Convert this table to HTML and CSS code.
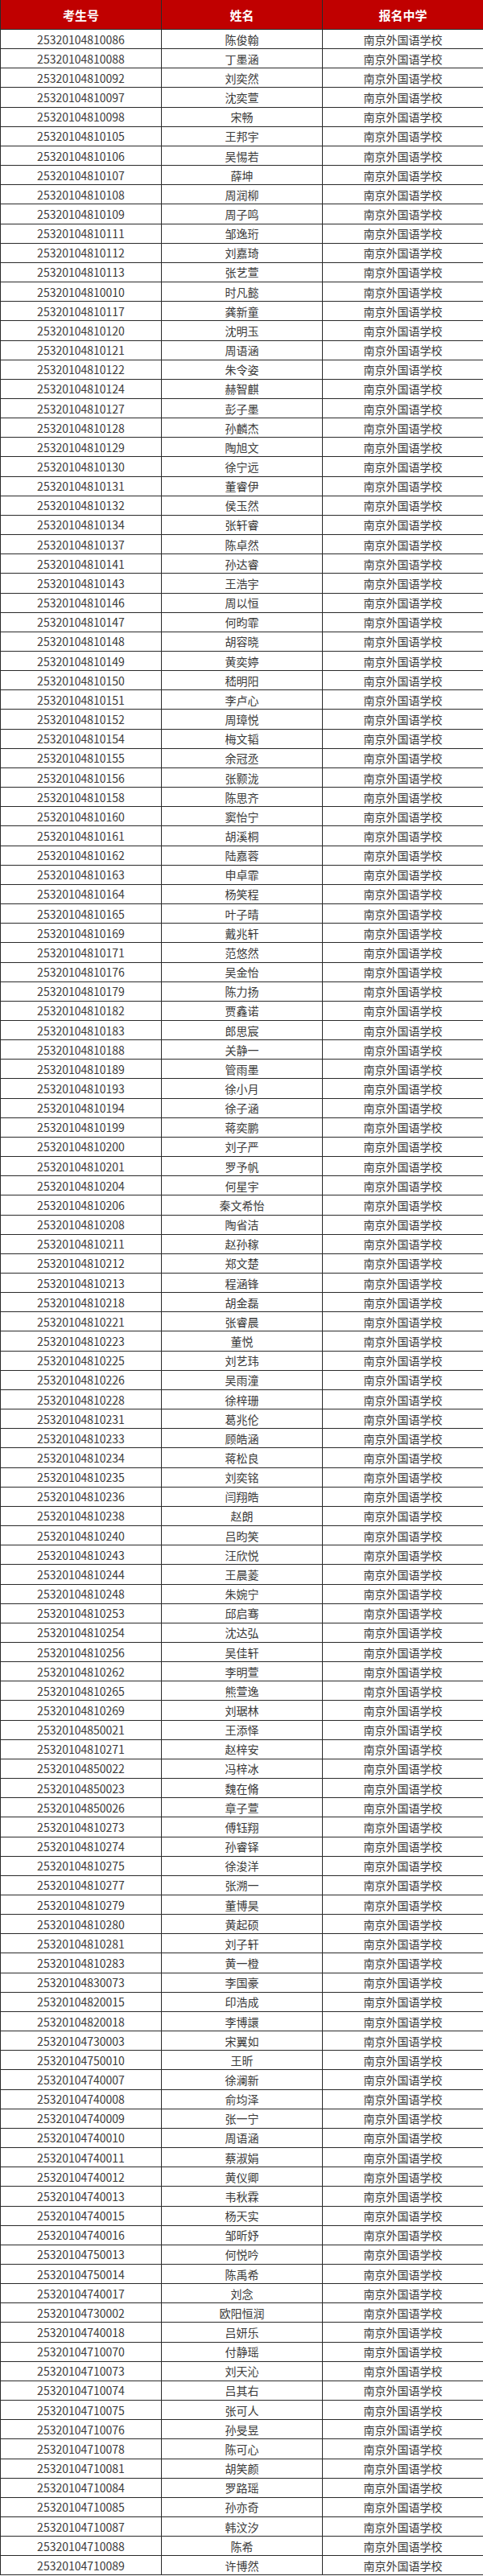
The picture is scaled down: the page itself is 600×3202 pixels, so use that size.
FILE: index.html
```html
<!DOCTYPE html>
<html lang="zh-CN">
<head>
<meta charset="utf-8">
<title>南京外国语学校 名单</title>
<link rel="stylesheet" href="styles.css">
</head>
<body>
<table class="roster">
<colgroup><col class="c1"><col class="c2"><col class="c3"></colgroup>
<thead>
<tr class="head"><th>考生号</th><th>姓名</th><th>报名中学</th></tr>
</thead>
<tbody>
<tr><td>25320104810086</td><td>陈俊翰</td><td>南京外国语学校</td></tr>
<tr><td>25320104810088</td><td>丁墨涵</td><td>南京外国语学校</td></tr>
<tr><td>25320104810092</td><td>刘奕然</td><td>南京外国语学校</td></tr>
<tr><td>25320104810097</td><td>沈奕萱</td><td>南京外国语学校</td></tr>
<tr><td>25320104810098</td><td>宋畅</td><td>南京外国语学校</td></tr>
<tr><td>25320104810105</td><td>王邦宇</td><td>南京外国语学校</td></tr>
<tr><td>25320104810106</td><td>吴惕若</td><td>南京外国语学校</td></tr>
<tr><td>25320104810107</td><td>薛坤</td><td>南京外国语学校</td></tr>
<tr><td>25320104810108</td><td>周润柳</td><td>南京外国语学校</td></tr>
<tr><td>25320104810109</td><td>周子鸣</td><td>南京外国语学校</td></tr>
<tr><td>25320104810111</td><td>邹逸珩</td><td>南京外国语学校</td></tr>
<tr><td>25320104810112</td><td>刘嘉琦</td><td>南京外国语学校</td></tr>
<tr><td>25320104810113</td><td>张艺萱</td><td>南京外国语学校</td></tr>
<tr><td>25320104810010</td><td>时凡懿</td><td>南京外国语学校</td></tr>
<tr><td>25320104810117</td><td>龚新童</td><td>南京外国语学校</td></tr>
<tr><td>25320104810120</td><td>沈明玉</td><td>南京外国语学校</td></tr>
<tr><td>25320104810121</td><td>周语涵</td><td>南京外国语学校</td></tr>
<tr><td>25320104810122</td><td>朱令姿</td><td>南京外国语学校</td></tr>
<tr><td>25320104810124</td><td>赫智麒</td><td>南京外国语学校</td></tr>
<tr><td>25320104810127</td><td>彭子墨</td><td>南京外国语学校</td></tr>
<tr><td>25320104810128</td><td>孙麟杰</td><td>南京外国语学校</td></tr>
<tr><td>25320104810129</td><td>陶旭文</td><td>南京外国语学校</td></tr>
<tr><td>25320104810130</td><td>徐宁远</td><td>南京外国语学校</td></tr>
<tr><td>25320104810131</td><td>董睿伊</td><td>南京外国语学校</td></tr>
<tr><td>25320104810132</td><td>侯玉然</td><td>南京外国语学校</td></tr>
<tr><td>25320104810134</td><td>张轩睿</td><td>南京外国语学校</td></tr>
<tr><td>25320104810137</td><td>陈卓然</td><td>南京外国语学校</td></tr>
<tr><td>25320104810141</td><td>孙达睿</td><td>南京外国语学校</td></tr>
<tr><td>25320104810143</td><td>王浩宇</td><td>南京外国语学校</td></tr>
<tr><td>25320104810146</td><td>周以恒</td><td>南京外国语学校</td></tr>
<tr><td>25320104810147</td><td>何昀霏</td><td>南京外国语学校</td></tr>
<tr><td>25320104810148</td><td>胡容晓</td><td>南京外国语学校</td></tr>
<tr><td>25320104810149</td><td>黄奕婷</td><td>南京外国语学校</td></tr>
<tr><td>25320104810150</td><td>嵇明阳</td><td>南京外国语学校</td></tr>
<tr><td>25320104810151</td><td>李卢心</td><td>南京外国语学校</td></tr>
<tr><td>25320104810152</td><td>周璋悦</td><td>南京外国语学校</td></tr>
<tr><td>25320104810154</td><td>梅文韬</td><td>南京外国语学校</td></tr>
<tr><td>25320104810155</td><td>余冠丞</td><td>南京外国语学校</td></tr>
<tr><td>25320104810156</td><td>张颢泷</td><td>南京外国语学校</td></tr>
<tr><td>25320104810158</td><td>陈思齐</td><td>南京外国语学校</td></tr>
<tr><td>25320104810160</td><td>窦怡宁</td><td>南京外国语学校</td></tr>
<tr><td>25320104810161</td><td>胡溪桐</td><td>南京外国语学校</td></tr>
<tr><td>25320104810162</td><td>陆嘉蓉</td><td>南京外国语学校</td></tr>
<tr><td>25320104810163</td><td>申卓霏</td><td>南京外国语学校</td></tr>
<tr><td>25320104810164</td><td>杨笑程</td><td>南京外国语学校</td></tr>
<tr><td>25320104810165</td><td>叶子晴</td><td>南京外国语学校</td></tr>
<tr><td>25320104810169</td><td>戴兆轩</td><td>南京外国语学校</td></tr>
<tr><td>25320104810171</td><td>范悠然</td><td>南京外国语学校</td></tr>
<tr><td>25320104810176</td><td>吴金怡</td><td>南京外国语学校</td></tr>
<tr><td>25320104810179</td><td>陈力扬</td><td>南京外国语学校</td></tr>
<tr><td>25320104810182</td><td>贾鑫诺</td><td>南京外国语学校</td></tr>
<tr><td>25320104810183</td><td>郎思宸</td><td>南京外国语学校</td></tr>
<tr><td>25320104810188</td><td>关静一</td><td>南京外国语学校</td></tr>
<tr><td>25320104810189</td><td>管雨墨</td><td>南京外国语学校</td></tr>
<tr><td>25320104810193</td><td>徐小月</td><td>南京外国语学校</td></tr>
<tr><td>25320104810194</td><td>徐子涵</td><td>南京外国语学校</td></tr>
<tr><td>25320104810199</td><td>蒋奕鹏</td><td>南京外国语学校</td></tr>
<tr><td>25320104810200</td><td>刘子严</td><td>南京外国语学校</td></tr>
<tr><td>25320104810201</td><td>罗予帆</td><td>南京外国语学校</td></tr>
<tr><td>25320104810204</td><td>何星宇</td><td>南京外国语学校</td></tr>
<tr><td>25320104810206</td><td>秦文希怡</td><td>南京外国语学校</td></tr>
<tr><td>25320104810208</td><td>陶省洁</td><td>南京外国语学校</td></tr>
<tr><td>25320104810211</td><td>赵孙稼</td><td>南京外国语学校</td></tr>
<tr><td>25320104810212</td><td>郑文楚</td><td>南京外国语学校</td></tr>
<tr><td>25320104810213</td><td>程涵锋</td><td>南京外国语学校</td></tr>
<tr><td>25320104810218</td><td>胡金磊</td><td>南京外国语学校</td></tr>
<tr><td>25320104810221</td><td>张睿晨</td><td>南京外国语学校</td></tr>
<tr><td>25320104810223</td><td>董悦</td><td>南京外国语学校</td></tr>
<tr><td>25320104810225</td><td>刘艺玮</td><td>南京外国语学校</td></tr>
<tr><td>25320104810226</td><td>吴雨潼</td><td>南京外国语学校</td></tr>
<tr><td>25320104810228</td><td>徐梓珊</td><td>南京外国语学校</td></tr>
<tr><td>25320104810231</td><td>葛兆伦</td><td>南京外国语学校</td></tr>
<tr><td>25320104810233</td><td>顾皓涵</td><td>南京外国语学校</td></tr>
<tr><td>25320104810234</td><td>蒋松良</td><td>南京外国语学校</td></tr>
<tr><td>25320104810235</td><td>刘奕铭</td><td>南京外国语学校</td></tr>
<tr><td>25320104810236</td><td>闫翔皓</td><td>南京外国语学校</td></tr>
<tr><td>25320104810238</td><td>赵朗</td><td>南京外国语学校</td></tr>
<tr><td>25320104810240</td><td>吕昀笑</td><td>南京外国语学校</td></tr>
<tr><td>25320104810243</td><td>汪欣悦</td><td>南京外国语学校</td></tr>
<tr><td>25320104810244</td><td>王晨菱</td><td>南京外国语学校</td></tr>
<tr><td>25320104810248</td><td>朱婉宁</td><td>南京外国语学校</td></tr>
<tr><td>25320104810253</td><td>邱启骞</td><td>南京外国语学校</td></tr>
<tr><td>25320104810254</td><td>沈达弘</td><td>南京外国语学校</td></tr>
<tr><td>25320104810256</td><td>吴佳轩</td><td>南京外国语学校</td></tr>
<tr><td>25320104810262</td><td>李明萱</td><td>南京外国语学校</td></tr>
<tr><td>25320104810265</td><td>熊萱逸</td><td>南京外国语学校</td></tr>
<tr><td>25320104810269</td><td>刘琚林</td><td>南京外国语学校</td></tr>
<tr><td>25320104850021</td><td>王添怿</td><td>南京外国语学校</td></tr>
<tr><td>25320104810271</td><td>赵梓安</td><td>南京外国语学校</td></tr>
<tr><td>25320104850022</td><td>冯梓冰</td><td>南京外国语学校</td></tr>
<tr><td>25320104850023</td><td>魏在脩</td><td>南京外国语学校</td></tr>
<tr><td>25320104850026</td><td>章子萱</td><td>南京外国语学校</td></tr>
<tr><td>25320104810273</td><td>傅钰翔</td><td>南京外国语学校</td></tr>
<tr><td>25320104810274</td><td>孙睿铎</td><td>南京外国语学校</td></tr>
<tr><td>25320104810275</td><td>徐浚洋</td><td>南京外国语学校</td></tr>
<tr><td>25320104810277</td><td>张溯一</td><td>南京外国语学校</td></tr>
<tr><td>25320104810279</td><td>董博昊</td><td>南京外国语学校</td></tr>
<tr><td>25320104810280</td><td>黄起硕</td><td>南京外国语学校</td></tr>
<tr><td>25320104810281</td><td>刘子轩</td><td>南京外国语学校</td></tr>
<tr><td>25320104810283</td><td>黄一橙</td><td>南京外国语学校</td></tr>
<tr><td>25320104830073</td><td>李国豪</td><td>南京外国语学校</td></tr>
<tr><td>25320104820015</td><td>印浩成</td><td>南京外国语学校</td></tr>
<tr><td>25320104820018</td><td>李博譞</td><td>南京外国语学校</td></tr>
<tr><td>25320104730003</td><td>宋翼如</td><td>南京外国语学校</td></tr>
<tr><td>25320104750010</td><td>王昕</td><td>南京外国语学校</td></tr>
<tr><td>25320104740007</td><td>徐澜新</td><td>南京外国语学校</td></tr>
<tr><td>25320104740008</td><td>俞均泽</td><td>南京外国语学校</td></tr>
<tr><td>25320104740009</td><td>张一宁</td><td>南京外国语学校</td></tr>
<tr><td>25320104740010</td><td>周语涵</td><td>南京外国语学校</td></tr>
<tr><td>25320104740011</td><td>蔡淑娟</td><td>南京外国语学校</td></tr>
<tr><td>25320104740012</td><td>黄仪卿</td><td>南京外国语学校</td></tr>
<tr><td>25320104740013</td><td>韦秋霖</td><td>南京外国语学校</td></tr>
<tr><td>25320104740015</td><td>杨天实</td><td>南京外国语学校</td></tr>
<tr><td>25320104740016</td><td>邹昕妤</td><td>南京外国语学校</td></tr>
<tr><td>25320104750013</td><td>何悦吟</td><td>南京外国语学校</td></tr>
<tr><td>25320104750014</td><td>陈禹希</td><td>南京外国语学校</td></tr>
<tr><td>25320104740017</td><td>刘念</td><td>南京外国语学校</td></tr>
<tr><td>25320104730002</td><td>欧阳恒润</td><td>南京外国语学校</td></tr>
<tr><td>25320104740018</td><td>吕妍乐</td><td>南京外国语学校</td></tr>
<tr><td>25320104710070</td><td>付静瑶</td><td>南京外国语学校</td></tr>
<tr><td>25320104710073</td><td>刘天沁</td><td>南京外国语学校</td></tr>
<tr><td>25320104710074</td><td>吕其右</td><td>南京外国语学校</td></tr>
<tr><td>25320104710075</td><td>张可人</td><td>南京外国语学校</td></tr>
<tr><td>25320104710076</td><td>孙旻昱</td><td>南京外国语学校</td></tr>
<tr><td>25320104710078</td><td>陈可心</td><td>南京外国语学校</td></tr>
<tr><td>25320104710081</td><td>胡笑颜</td><td>南京外国语学校</td></tr>
<tr><td>25320104710084</td><td>罗路瑶</td><td>南京外国语学校</td></tr>
<tr><td>25320104710085</td><td>孙亦奇</td><td>南京外国语学校</td></tr>
<tr><td>25320104710087</td><td>韩汶汐</td><td>南京外国语学校</td></tr>
<tr><td>25320104710088</td><td>陈希</td><td>南京外国语学校</td></tr>
<tr><td>25320104710089</td><td>许博然</td><td>南京外国语学校</td></tr>
</tbody>
</table>
</body>
</html>
```
FILE: styles.css
```css
html, body {
  margin: 0;
  padding: 0;
  background: #ffffff;
}

.roster {
  width: 600px;
  border-collapse: collapse;
  table-layout: fixed;
  font-family: "Noto Sans CJK SC", "Noto Sans", sans-serif;
  font-size: 14px;
  color: #3a3a3a;
}

.roster col {
  width: 200px;
}

.roster th,
.roster td {
  padding: 0;
  text-align: center;
  vertical-align: middle;
  border: 1px solid #2a2a2a;
  line-height: 1;
  white-space: nowrap;
}

.roster th {
  height: 36px;
  background: #c00000;
  color: #ffffff;
  font-weight: bold;
  font-size: 15px;
  border-color: #2a2a2a;
  border-top: none;
}

.roster tbody td {
  height: 23.17px;
}
```
